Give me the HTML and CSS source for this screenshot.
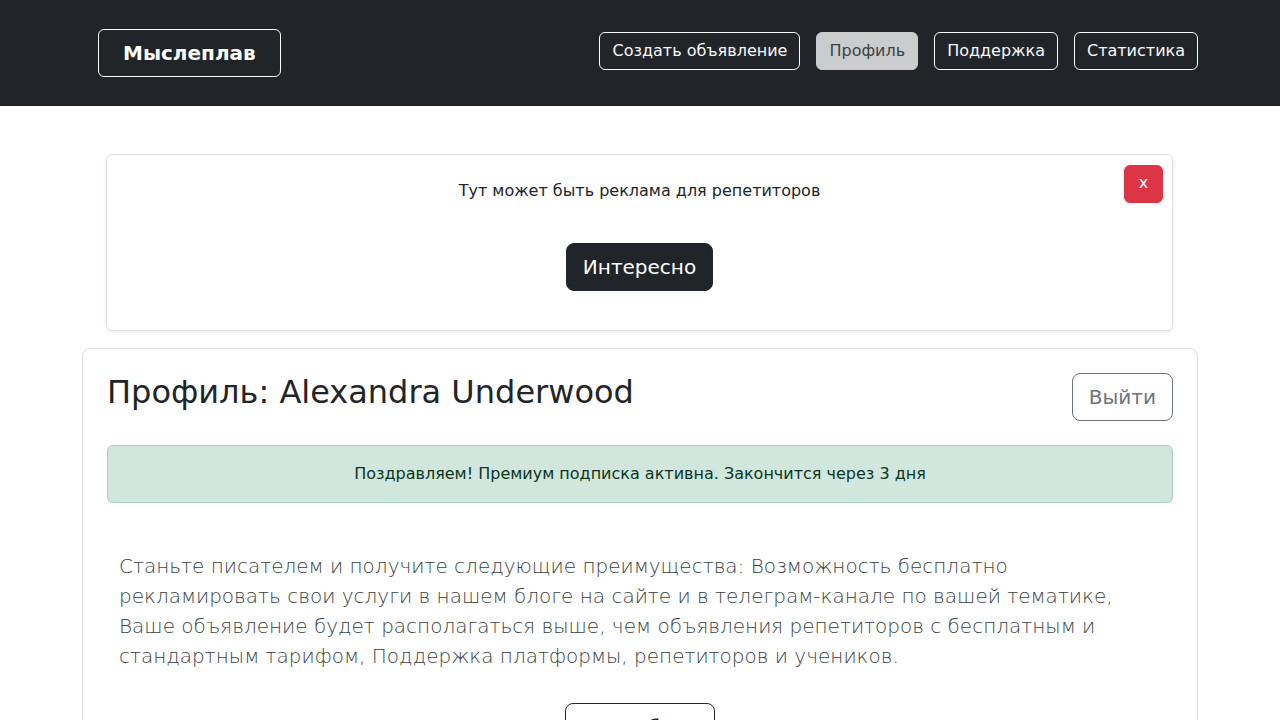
FILE: index.html
```html
<!DOCTYPE html>
<html lang="ru">
<head>
<meta charset="utf-8">
<title>Мыслеплав — Профиль</title>
<link rel="stylesheet" href="styles.css">
</head>
<body>
<header class="navbar">
  <div class="nav-inner">
    <a class="brand" href="#">Мыслеплав</a>
    <nav class="nav-links">
      <a class="nav-btn" href="#">Создать объявление</a>
      <a class="nav-btn active" href="#">Профиль</a>
      <a class="nav-btn" href="#">Поддержка</a>
      <a class="nav-btn" href="#">Статистика</a>
    </nav>
  </div>
</header>
<main class="container">
  <section class="ad-card">
    <p class="ad-text">Тут может быть реклама для репетиторов</p>
    <button class="btn-dark-lg">Интересно</button>
    <button class="ad-close">x</button>
  </section>
  <section class="profile-card">
    <div class="profile-head">
      <h2 class="profile-title">Профиль: Alexandra Underwood</h2>
      <button class="btn-logout">Выйти</button>
    </div>
    <div class="alert-success">Поздравляем! Премиум подписка активна. Закончится через 3 дня</div>
    <div class="benefits">
      <p class="lead">Станьте писателем и получите следующие преимущества: Возможность бесплатно рекламировать свои услуги в нашем блоге на сайте и в телеграм-канале по вашей тематике, Ваше объявление будет располагаться выше, чем объявления репетиторов с бесплатным и стандартным тарифом, Поддержка платформы, репетиторов и учеников.</p>
      <div class="center">
        <button class="btn-outline-dark-lg">Подробнее</button>
      </div>
    </div>
  </section>
</main>
</body>
</html>
```
FILE: styles.css
```css
* { box-sizing: border-box; }
html, body { margin: 0; padding: 0; }
body {
  font-family: "DejaVu Sans", sans-serif;
  font-size: 16px;
  line-height: 1.5;
  color: #212529;
  background: #fff;
}
.navbar {
  background: #212529;
  height: 106px;
  display: flex;
  align-items: center;
}
.nav-inner {
  width: 1140px;
  margin: 0 auto;
  padding: 0 12px;
  display: flex;
  align-items: center;
  justify-content: space-between;
}
.brand {
  margin-left: 16px;
  display: inline-block;
  height: 48px;
  padding: 0 24px;
  line-height: 46px;
  border: 1px solid #f8f9fa;
  border-radius: 6px;
  color: #fff;
  font-weight: bold;
  font-size: 20px;
  text-decoration: none;
}
.nav-links {
  display: flex;
  gap: 16px;
  margin-bottom: 4px;
}
.nav-btn {
  display: inline-block;
  height: 38px;
  padding: 0 12px;
  line-height: 36px;
  border: 1px solid #f8f9fa;
  border-radius: 6px;
  color: #f8f9fa;
  text-decoration: none;
  font-size: 16px;
}
.nav-btn.active {
  background: #cbcccd;
  border-color: #cbcccd;
  color: #3d4247;
}
.container {
  width: 1140px;
  margin: 0 auto;
  padding: 48px 12px 0;
}
.ad-card {
  position: relative;
  margin: 0 25px 0 24px;
  border: 1px solid #dee2e6;
  border-radius: 6px;
  box-shadow: 0 2px 4px rgba(0,0,0,0.08);
  padding: 24px 16px 39px;
  text-align: center;
}
.ad-text {
  margin: 0 0 40px;
  font-size: 16px;
  line-height: 24px;
}
.btn-dark-lg {
  font-family: inherit;
  font-size: 20px;
  height: 48px;
  padding: 0 16px;
  background: #212529;
  color: #fff;
  border: 1px solid #212529;
  border-radius: 8px;
  vertical-align: top;
}
.ad-close {
  position: absolute;
  top: 10px;
  right: 9px;
  width: 39px;
  height: 38px;
  background: #dc3545;
  border: 1px solid #dc3545;
  border-radius: 6px;
  color: #fff;
  font-family: inherit;
  font-size: 16px;
  line-height: 1;
  padding: 0 0 2px;
}
.profile-card {
  margin-top: 17px;
  border: 1px solid #dee2e6;
  border-radius: 8px;
  padding: 24px 24px 0;
  min-height: 400px;
}
.profile-head {
  display: flex;
  justify-content: space-between;
  align-items: flex-start;
}
.profile-title {
  margin: 0;
  font-size: 32px;
  font-weight: 500;
  line-height: 1.2;
}
.btn-logout {
  font-family: inherit;
  font-size: 20px;
  height: 48px;
  padding: 0 16px;
  background: #fff;
  color: #6c757d;
  border: 1px solid #6c757d;
  border-radius: 8px;
}
.alert-success {
  margin-top: 24px;
  padding: 16px;
  background: #d1e7dd;
  border: 1px solid #a3cfbb;
  border-radius: 6px;
  color: #0a3622;
  text-align: center;
  line-height: 24px;
}
.benefits {
  padding: 48px 12px 0;
}
.lead {
  margin: 0 0 32px;
  font-size: 20px;
  font-weight: 300;
  line-height: 30px;
  color: #3a3f44;
}
.center { text-align: center; }
.btn-outline-dark-lg {
  font-family: inherit;
  font-size: 20px;
  height: 48px;
  width: 150px;
  padding: 0 16px;
  background: #fff;
  color: #212529;
  border: 1px solid #212529;
  border-radius: 8px;
}
```
